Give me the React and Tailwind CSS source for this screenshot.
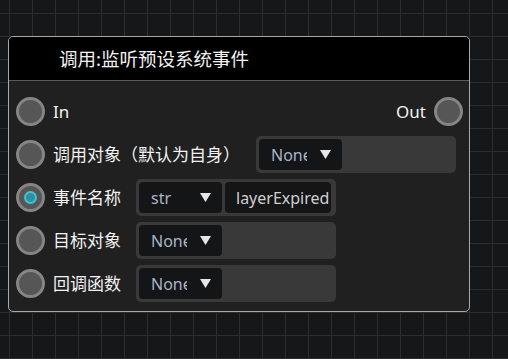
function Pin({ active }) {
    return (
        <span className="grid size-[29px] shrink-0 place-content-center rounded-full border-[3px] border-[#858585] bg-[#565656]">
            {active && (
                <span className="grid size-[13px] place-content-center rounded-full border-2 border-[#3fc3d4] bg-[#2f8f9d]"></span>
            )}
        </span>
    );
}

function Select({ value }) {
    return (
        <div className="flex h-full w-[83px] shrink-0 items-center rounded-[4px] bg-[#141517] pl-3 pr-[11px]">
            <span className="w-[36px] overflow-hidden whitespace-nowrap text-[16px] text-[#a7b6c7]">{value}</span>
            {/* flecha */}
            <svg className="ml-auto" width="11" height="9" viewBox="0 0 11 9">
                <polygon points="0,0 11,0 5.5,9" fill="#e6e6e6" />
            </svg>
        </div>
    );
}

function Field({ children, className = "" }) {
    return (
        <div className={`flex h-[37px] w-[200px] gap-[3px] rounded-[5px] bg-[#393939] p-[3px] ${className}`}>
            {children}
        </div>
    );
}

export default function App() {
    return (
        <div
            className="h-[359px] w-full overflow-hidden bg-[#161719] bg-[image:linear-gradient(to_right,#2c2d2f_1px,transparent_1px),linear-gradient(to_bottom,#2c2d2f_1px,transparent_1px)] bg-[size:23px_23px] bg-[position:9px_13px] pl-[8px] pt-[36px]"
            style={{ fontFamily: '"Noto Sans", "Noto Sans CJK SC", sans-serif' }}>

            {/* nodo */}
            <div className="flex h-[276px] w-[462px] flex-col overflow-hidden rounded-[5px] border border-[#a9a9a9] bg-[#202020] text-[#f2f2f2]">

                {/* cabecera */}
                <div className="flex h-[44px] shrink-0 items-center border-b border-[#5a5a5a] bg-black pl-[50px] text-[18.5px]">
                    调用:监听预设系统事件
                </div>

                {/* filas */}
                <div className="flex flex-col pt-[9px] text-[17px]">
                    <div className="flex h-[43px] items-center pl-[7px] pr-[6px]">
                        <Pin />
                        <span className="ml-2">In</span>
                        <span className="ml-auto mr-2">Out</span>
                        <Pin />
                    </div>

                    <div className="flex h-[43px] items-center pl-[7px]">
                        <Pin />
                        <span className="ml-2">调用对象（默认为自身）</span>
                        <Field className="ml-auto mr-[13px]">
                            <Select value="None" />
                        </Field>
                    </div>

                    <div className="flex h-[43px] items-center pl-[7px]">
                        <Pin active />
                        <span className="ml-2 w-[83px]">事件名称</span>
                        <Field>
                            <Select value="str" />
                            <div className="flex h-full w-[106px] items-center rounded-[4px] bg-[#141517] pl-[11px] text-[16px] text-[#cfcfcf]">
                                layerExpired
                            </div>
                        </Field>
                    </div>

                    <div className="flex h-[43px] items-center pl-[7px]">
                        <Pin />
                        <span className="ml-2 w-[83px]">目标对象</span>
                        <Field>
                            <Select value="None" />
                        </Field>
                    </div>

                    <div className="flex h-[43px] items-center pl-[7px]">
                        <Pin />
                        <span className="ml-2 w-[83px]">回调函数</span>
                        <Field>
                            <Select value="None" />
                        </Field>
                    </div>
                </div>
            </div>
        </div>
    );
}
